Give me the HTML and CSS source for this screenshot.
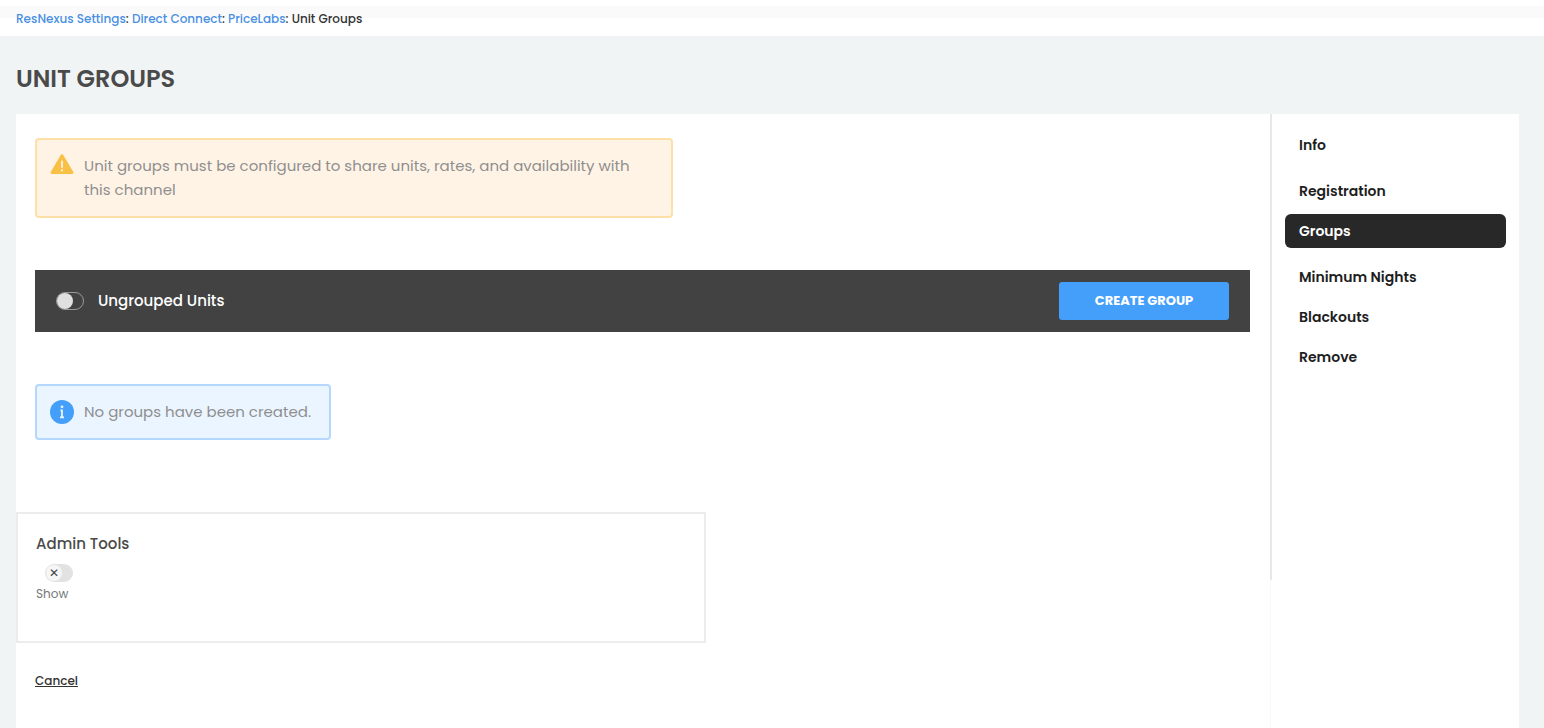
FILE: index.html
```html
<!DOCTYPE html>
<html lang="en">
<head>
    <meta charset="UTF-8">
    <meta name="viewport" content="width=device-width, initial-scale=1.0">
    <title>Unit Groups</title>
    <link rel="stylesheet" href="styles.css">
</head>
<body>
    <!-- Breadcrumb -->
    <nav class="breadcrumb" aria-label="Breadcrumb">
        <a href="#">ResNexus Settings</a>: <a href="#">Direct Connect</a>: <a href="#">PriceLabs</a>: <span>Unit Groups</span>
    </nav>

    <h1 class="page-title">Unit Groups</h1>

    <div class="panel">
        <main class="content">
            <div class="alert alert-warning">
                <svg class="alert-icon" viewBox="0 0 24 24" aria-hidden="true">
                    <path d="M10.7 1.1a1.5 1.5 0 0 1 2.6 0l10 16.8a1.5 1.5 0 0 1-1.3 2.2H2a1.5 1.5 0 0 1-1.3-2.2z" fill="#f8c146"/>
                    <path d="M12 7.5v5.5" stroke="#fff3e6" stroke-width="1.8" stroke-linecap="round"/>
                    <circle cx="12" cy="16.3" r="1.1" fill="#fff3e6"/>
                </svg>
                <p>Unit groups must be configured to share units, rates, and availability with this channel</p>
            </div>

            <!-- Ungrouped units bar -->
            <div class="group-bar">
                <label class="group-label">
                    <input type="checkbox" class="toggle toggle-outline">
                    Ungrouped Units
                </label>
                <button type="button" class="btn">Create Group</button>
            </div>

            <div class="alert alert-info">
                <svg class="alert-icon" viewBox="0 0 24 24" aria-hidden="true">
                    <circle cx="12" cy="12" r="12" fill="#449ffb"/>
                    <circle cx="12" cy="6.8" r="1.4" fill="#eaf5ff"/>
                    <path d="M10.5 10.5H12V17M10 17.3h4" fill="none" stroke="#eaf5ff" stroke-width="1.8"/>
                </svg>
                <p>No groups have been created.</p>
            </div>

            <!-- Admin tools -->
            <section class="admin">
                <h2 class="admin-title">Admin Tools</h2>
                <input type="checkbox" class="toggle toggle-x" id="showAdmin">
                <label class="admin-label" for="showAdmin">Show</label>
            </section>

            <a href="#" class="cancel">Cancel</a>
        </main>

        <!-- Side menu -->
        <nav class="side-menu" aria-label="Channel">
            <ul>
                <li><a href="#">Info</a></li>
            </ul>
            <ul>
                <li><a href="#">Registration</a></li>
                <li><a href="#" class="active" aria-current="page">Groups</a></li>
            </ul>
            <ul>
                <li><a href="#">Minimum Nights</a></li>
                <li><a href="#">Blackouts</a></li>
                <li><a href="#">Remove</a></li>
            </ul>
        </nav>
    </div>
</body>
</html>
```
FILE: styles.css
```css
* {
    margin: 0;
    padding: 0;
    box-sizing: border-box;
}

body {
    min-height: 100vh;
    display: flex;
    flex-direction: column;
    background: #f0f4f5;
    color: #4a4a4a;
    font-family: Poppins, Inter, "Liberation Sans", sans-serif;
    font-size: 15px;
    line-height: 24px;
}

/* Breadcrumb */
.breadcrumb {
    padding: 11px 16px 9px;
    background: linear-gradient(#fff 6px, #fafafa 6px, #fafafa 18px, #fff 18px);
    color: #333;
    font-size: 12px;
    font-weight: 500;
    line-height: 16px;
}
.breadcrumb a {
    color: #4a90e2;
    text-decoration: none;
}

.page-title {
    padding: 31px 16px 23px;
    font-size: 24px;
    font-weight: 600;
    line-height: 24px;
    text-transform: uppercase;
}

/* Main panel */
.panel {
    flex: 1;
    display: flex;
    margin: 0 25px 0 16px;
    background: #fff;
}
.content {
    flex: 1;
    display: flex;
    flex-direction: column;
    align-items: flex-start;
    padding: 24px 20px 24px 19px;
    border-right: 1px solid #f8f8f8;
}

/* Alerts */
.alert {
    display: flex;
    gap: 10px;
    padding: 14px 18px 14px 13px;
    border: 2px solid;
    border-radius: 4px;
    color: #8f8f8f;
}
.alert-icon {
    flex: none;
    width: 24px;
    height: 24px;
}
.alert-warning {
    max-width: 638px;
    background: #fff3e6;
    border-color: #fce0a6;
}
.alert-info {
    background: #eaf5ff;
    border-color: #b3d7fe;
}

/* Ungrouped units bar */
.group-bar {
    align-self: stretch;
    display: flex;
    justify-content: space-between;
    align-items: center;
    margin: 52px 0;
    padding: 12px 21px;
    background: #424242;
}
.group-label {
    display: flex;
    align-items: center;
    gap: 14px;
    color: #fff;
    font-weight: 500;
}
.btn {
    width: 170px;
    height: 38px;
    border: none;
    border-radius: 3px;
    background: #449ffb;
    color: #fff;
    font-family: inherit;
    font-size: 13px;
    font-weight: 700;
    text-transform: uppercase;
    cursor: pointer;
}

/* Toggle switches */
.toggle {
    appearance: none;
    display: flex;
    align-items: center;
    width: 28px;
    height: 18px;
    border-radius: 9px;
    cursor: pointer;
}
.toggle::before {
    content: "";
    width: 16px;
    height: 16px;
    border-radius: 50%;
}
.toggle-outline {
    border: 1px solid #9a9a9a;
}
.toggle-outline::before {
    background: #e0e0e0;
}
.toggle-x {
    margin: 8px 9px 2px;
    padding: 1px;
    background: #e2e2e2;
}
.toggle-x::before {
    content: "✕";
    background: #f6f6f6;
    color: #444;
    font: 700 12px/16px "DejaVu Sans", sans-serif;
    text-align: center;
}
.toggle:checked {
    justify-content: flex-end;
}

/* Admin tools */
.admin {
    width: 690px;
    max-width: 100%;
    margin: 72px 0 28px -19px;
    padding: 18px 18px 37px;
    border: 2px solid #ececec;
}
.admin-title {
    font-size: 15px;
    font-weight: 500;
}
.admin-label {
    display: block;
    color: #777;
    font-size: 12px;
    line-height: 20px;
}

.cancel {
    color: #333;
    font-size: 12px;
    font-weight: 500;
    line-height: 20px;
}

/* Side menu */
.side-menu {
    width: 249px;
    height: 466px;
    display: flex;
    flex-direction: column;
    gap: 12px;
    margin-left: -1px;
    padding: 14px 13px;
    border-left: 2px solid #e8e8e8;
}
.side-menu ul {
    display: flex;
    flex-direction: column;
    gap: 6px;
    list-style: none;
}
.side-menu a {
    display: block;
    padding: 5px 14px;
    border-radius: 6px;
    color: #1e1e1e;
    font-size: 14px;
    font-weight: 600;
    text-decoration: none;
}
.side-menu a.active {
    background: #282828;
    color: #fff;
}
```
